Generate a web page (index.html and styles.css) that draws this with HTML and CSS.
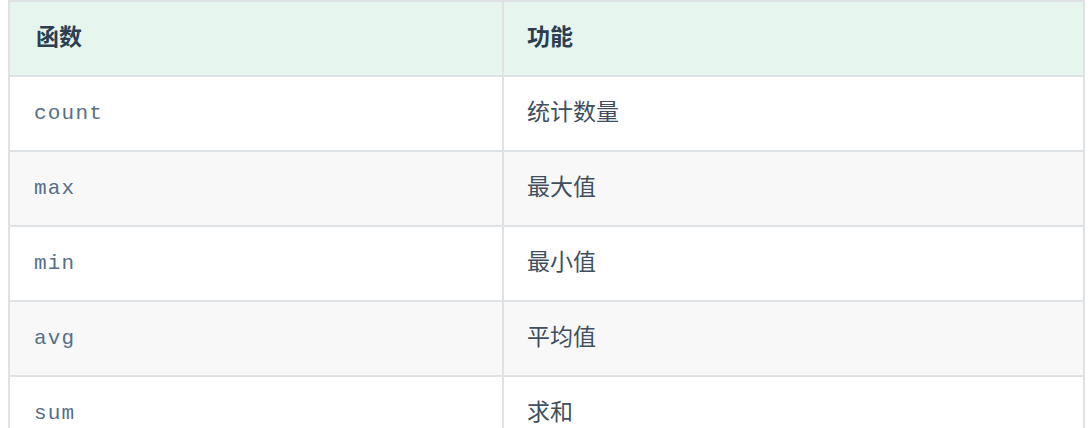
FILE: index.html
```html
<!DOCTYPE html>
<html lang="zh">
<head>
<meta charset="utf-8">
<link rel="stylesheet" href="styles.css">
</head>
<body>
<table class="fn-table">
  <thead>
    <tr><th>函数</th><th>功能</th></tr>
  </thead>
  <tbody>
    <tr><td><code>count</code></td><td>统计数量</td></tr>
    <tr><td><code>max</code></td><td>最大值</td></tr>
    <tr><td><code>min</code></td><td>最小值</td></tr>
    <tr><td><code>avg</code></td><td>平均值</td></tr>
    <tr><td><code>sum</code></td><td>求和</td></tr>
  </tbody>
</table>
</body>
</html>
```

FILE: styles.css
```css
html, body {
  margin: 0;
  padding: 0;
  background: #ffffff;
}
body {
  padding-left: 8px;
  font-family: "Noto Sans CJK SC", "Noto Sans", sans-serif;
  color: #2c3e50;
}
.fn-table {
  border-collapse: collapse;
  width: 1077px;
  table-layout: fixed;
}
.fn-table th,
.fn-table td {
  border: 2.5px solid #dfe2e5;
  height: 75px;
  padding: 0 23px 6px 24px;
  text-align: left;
  box-sizing: border-box;
  font-size: 23px;
  line-height: 1;
}
.fn-table th:first-child,
.fn-table td:first-child {
  width: 494px;
}
.fn-table th:last-child,
.fn-table td:last-child {
  padding-left: 23px;
}
.fn-table th:first-child {
  padding-left: 26px;
}
.fn-table thead tr {
  background: #e6f6ee;
}
.fn-table th {
  font-weight: 700;
  color: #2c3e50;
}
.fn-table td {
  color: #3f4f5f;
}
.fn-table tbody tr:nth-child(even) {
  background: #f8f8f8;
}
.fn-table code {
  font-family: "Liberation Mono", "Courier New", monospace;
  font-size: 21px;
  color: #556f88;
  letter-spacing: 1.2px;
}
```
